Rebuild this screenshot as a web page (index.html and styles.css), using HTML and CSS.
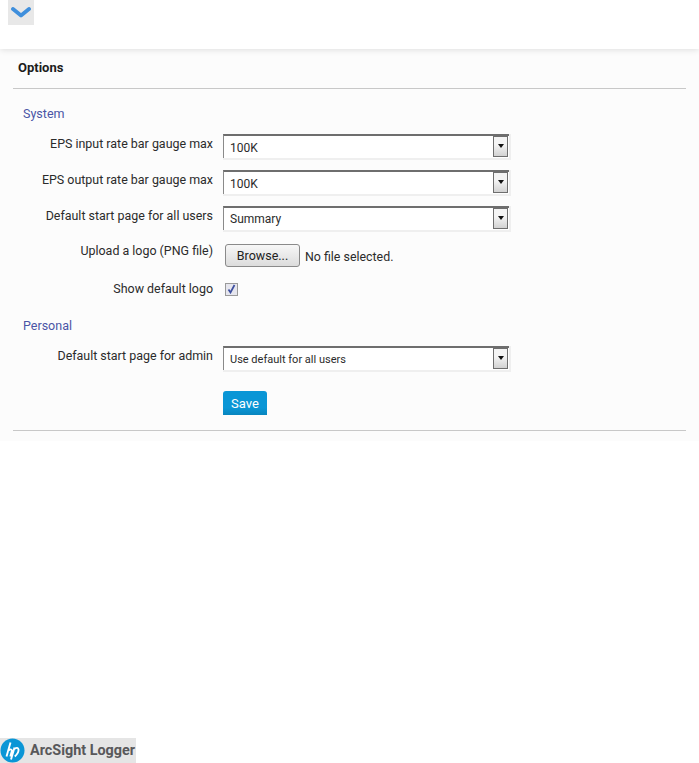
FILE: index.html
```html
<!DOCTYPE html>
<html lang="en">
<head>
    <meta charset="UTF-8">
    <title>Options</title>
    <link rel="stylesheet" href="styles.css">
</head>
<body>
    <div class="top-bar">
        <button class="toggle" type="button" aria-label="Collapse">
            <svg width="20" height="11" viewBox="0 0 20 11"><path d="M2 2 10 8.500 18 2" fill="none" stroke="#3f8fdc" stroke-width="3.800" stroke-linecap="round" stroke-linejoin="round"/></svg>
        </button>
    </div>

    <div class="options-panel">
        <h1>Options</h1>
        <form class="options-form">
            <h2>System</h2>
            <div class="row">
                <label>EPS input rate bar gauge max</label>
                <div class="select-box"><select><option>100K</option></select></div>
            </div>
            <div class="row">
                <label>EPS output rate bar gauge max</label>
                <div class="select-box"><select><option>100K</option></select></div>
            </div>
            <div class="row">
                <label>Default start page for all users</label>
                <div class="select-box"><select class="tight"><option>Summary</option></select></div>
            </div>
            <div class="row row-upload">
                <label>Upload a logo (PNG file)</label>
                <button class="browse" type="button">Browse...</button>
                <span class="no-file">No file selected.</span>
            </div>
            <div class="row row-check">
                <label>Show default logo</label>
                <span class="check">
                    <svg width="9" height="10" viewBox="0 0 9 10"><path d="M1.500 5.500 3.500 8.500 7.500 1" fill="none" stroke="#3d4f9f" stroke-width="1.700"/></svg>
                </span>
            </div>
            <h2 class="personal">Personal</h2>
            <div class="row">
                <label>Default start page for admin</label>
                <div class="select-box"><select class="small"><option>Use default for all users</option></select></div>
            </div>
            <div class="row row-save">
                <button class="save" type="button">Save</button>
            </div>
        </form>
    </div>

    <div class="footer">
        <div class="logo">
            <svg width="25" height="25" viewBox="0 0 25 25"><circle cx="12.500" cy="12.500" r="12" fill="#0a96d6"/><path d="M10.500 4.500 6.500 18.500M7.800 13q3.200-3 4.200-.5l-1.700 6M14.500 9.500 11 21.500M14.300 11q3.700-2.500 4.200.5t-3.700 7" fill="none" stroke="#fff" stroke-width="1.900"/></svg>
            <span>ArcSight Logger</span>
        </div>
    </div>
</body>
</html>
```

FILE: styles.css
```css
body {
    margin: 0;
    min-height: 763px;
    display: flex;
    flex-direction: column;
    background: #ffffff;
    color: #2b2b2b;
    font-family: 'Roboto', sans-serif;
    font-size: 12px;
    overflow: hidden;
}
.top-bar {
    height: 49px;
    padding-left: 8px;
    box-sizing: border-box;
    box-shadow: 0 1px 6px rgba(0, 0, 0, 0.12);
    position: relative;
}
.toggle {
    display: flex;
    align-items: center;
    justify-content: center;
    width: 26px;
    height: 25px;
    padding: 0;
    border: none;
    background: #e8e8e8;
}
.options-panel {
    background: #fcfcfc;
    padding: 0 13px 9px;
    height: 392px;
    box-sizing: border-box;
}
h1 {
    margin: 0;
    padding: 11px 0 12px 5px;
    font-size: 13px;
    font-weight: 700;
    line-height: 16px;
    color: #1c1c1c;
    border-bottom: 1px solid #c8c8c8;
}
.options-form {
    border-bottom: 1px solid #c8c8c8;
    padding-bottom: 15px;
}
h2 {
    margin: 0;
    padding: 16px 0 12px 10px;
    font-size: 12.500px;
    font-weight: 400;
    line-height: 17px;
    color: #4a55a5;
}
h2.personal {
    padding-top: 18px;
    padding-bottom: 12px;
}
.row {
    display: flex;
    align-items: flex-start;
    margin-bottom: 10px;
}
.row label {
    width: 200px;
    margin-right: 10px;
    text-align: right;
    line-height: 20px;
    font-size: 12.450px;
}
.select-box {
    position: relative;
    width: 288px;
    height: 26px;
    background: #efefef;
}
.select-box select {
    appearance: none;
    display: block;
    width: 286px;
    height: 24px;
    padding: 1px 0 0 6px;
    border: none;
    border-top: 2px solid #6e6e6e;
    border-left: 1px solid #8a8a8a;
    border-radius: 0;
    background: #ffffff;
    color: #2b2b2b;
    font-family: 'Roboto', sans-serif;
    font-size: 12px;
}
.select-box select.tight {
    padding-top: 0;
}
.select-box select.small {
    font-size: 11px;
}
.select-box::after {
    content: "";
    position: absolute;
    right: 3px;
    top: 2px;
    width: 13px;
    height: 19px;
    border: 1px solid #6e6e6e;
    background: linear-gradient(#f4f4f4 40%, #d2d2d2);
}
.select-box::before {
    content: "";
    position: absolute;
    z-index: 1;
    right: 7px;
    top: 10px;
    border-top: 4px solid #111111;
    border-left: 3px solid transparent;
    border-right: 3px solid transparent;
}
.row-upload {
    margin: 12px 0 10px;
}
.row-upload label {
    margin-top: -3px;
    margin-right: 12px;
}
.browse {
    width: 75px;
    height: 23px;
    padding: 0;
    border: 1px solid #8a8a8a;
    border-radius: 3px;
    background: linear-gradient(#f7f7f7, #dcdcdc);
    color: #222222;
    font-family: 'Roboto', sans-serif;
    font-size: 12.500px;
}
.no-file {
    margin-left: 5px;
    line-height: 25px;
    font-size: 12.400px;
}
.row-check {
    align-items: center;
    margin: 0;
}
.row-check label {
    margin-right: 12px;
}
.check {
    display: flex;
    align-items: center;
    justify-content: center;
    width: 11px;
    height: 11px;
    border: 1px solid #9a9a9a;
    background: #e6e6ee;
}
.row-save {
    margin: 19px 0 0 210px;
}
.save {
    width: 44px;
    height: 24px;
    padding: 0;
    border: none;
    border-radius: 3px 3px 0 0;
    background: linear-gradient(#0a96d6 70%, #0885be);
    color: #ffffff;
    font-family: 'Roboto', sans-serif;
    font-size: 13px;
}
.footer {
    margin-top: auto;
}
.logo {
    display: flex;
    align-items: center;
    gap: 5px;
    width: 136px;
    height: 25px;
    background: #e5e5e5;
}
.logo span {
    font-size: 14.400px;
    font-weight: 700;
    color: #58585a;
}
```
